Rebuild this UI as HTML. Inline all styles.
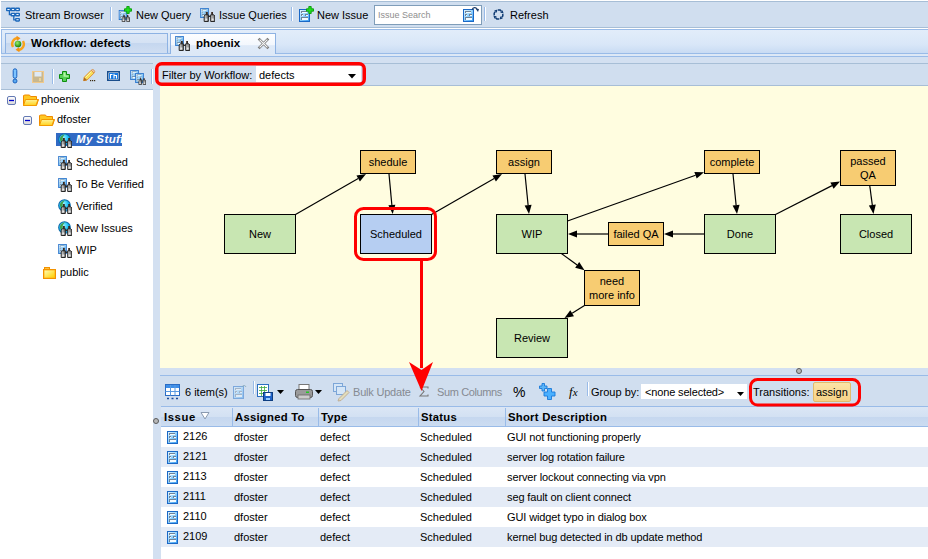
<!DOCTYPE html>
<html><head><meta charset="utf-8">
<style>
*{box-sizing:border-box;margin:0;padding:0}
html,body{width:928px;height:559px;overflow:hidden;background:#fff;font-family:"Liberation Sans",sans-serif;font-size:11px;color:#000}
.a{position:absolute}
.t{position:absolute;white-space:nowrap;line-height:13px}
svg{position:absolute;overflow:visible}
</style></head><body>

<!-- top toolbar -->
<div class="a" style="left:1px;top:1px;width:927px;height:27px;background:#d0deef;border-top:1px solid #a7bed6;border-bottom:1px solid #a7bed6"></div>
<div class="t" style="left:25px;top:9px">Stream Browser</div>
<div class="a" style="left:110px;top:7px;width:2px;height:14px;background:#99bbe8;border-right:1px solid #fff"></div>
<div class="t" style="left:136px;top:9px">New Query</div>
<div class="t" style="left:219px;top:9px">Issue Queries</div>
<div class="a" style="left:291px;top:7px;width:2px;height:14px;background:#99bbe8;border-right:1px solid #fff"></div>
<div class="t" style="left:317px;top:9px">New Issue</div>
<div class="a" style="left:374px;top:5px;width:108px;height:20px;background:#fff;border:1px solid #7f9db9"></div>
<div class="t" style="left:378px;top:9px;color:#8e8e8e;font-size:9px">Issue Search</div>
<div class="a" style="left:484px;top:7px;width:2px;height:14px;background:#99bbe8;border-right:1px solid #fff"></div>
<div class="t" style="left:510px;top:9px">Refresh</div>

<!-- tab strip -->
<div class="a" style="left:1px;top:29px;width:927px;height:28px;background:linear-gradient(#e2edfa,#d9e7f8 55%,#c3d7f2);border:1px solid #99bbe8;border-right:none"></div>
<div class="a" style="left:1px;top:53px;width:927px;height:4px;background:#dde8f6;border-top:1px solid #99bbe8;border-bottom:1px solid #99bbe8"></div>
<div class="a" style="left:5px;top:33px;width:163px;height:20px;background:linear-gradient(#dce7f6 0,#d5e2f4 45%,#c5d7ef 50%,#d0def2 100%);border:1px solid #8db2e3;border-bottom:none"></div>
<div class="t" style="left:31px;top:36px;font-weight:bold;font-size:11.6px">Workflow: defects</div>
<div class="a" style="left:170px;top:33px;width:106px;height:21px;background:linear-gradient(#fdfeff 0,#f3f7fd 55%,#dfeaf8 58%,#dce8f7 100%);border:1px solid #8db2e3;border-bottom:none"></div>
<div class="t" style="left:196px;top:37px;font-weight:bold;font-size:11.5px">phoenix</div>

<!-- body bg -->
<div class="a" style="left:1px;top:57px;width:927px;height:502px;background:#d3e0f1"></div>

<!-- left panel -->
<div class="a" style="left:1px;top:63px;width:152px;height:496px;background:#fff"></div>
<div class="a" style="left:1px;top:63px;width:152px;height:27px;background:#d0deef;border-top:1px solid #a7bed6;border-bottom:1px solid #a7bed6"></div>

<!-- tree -->
<div class="t" style="left:41px;top:93px">phoenix</div>
<div class="t" style="left:57px;top:113px">dfoster</div>
<div class="a" style="left:56px;top:133px;width:66px;height:13px;background:#316ac5"></div>
<div class="t" style="left:76px;top:133px;font-weight:bold;font-style:italic;color:#fff;width:46px;overflow:hidden;font-size:11.5px;letter-spacing:0.4px">My Stuff</div>
<div class="t" style="left:76px;top:156px">Scheduled</div>
<div class="t" style="left:76px;top:178px">To Be Verified</div>
<div class="t" style="left:76px;top:200px">Verified</div>
<div class="t" style="left:76px;top:222px">New Issues</div>
<div class="t" style="left:76px;top:244px">WIP</div>
<div class="t" style="left:60px;top:266px">public</div>

<!-- filter bar -->
<div class="a" style="left:160px;top:63px;width:768px;height:23px;background:#d0deef;border-top:1px solid #a7bed6;border-bottom:1px solid #a7bed6"></div>
<div class="t" style="left:162px;top:69px">Filter by Workflow:</div>
<div class="a" style="left:256px;top:66px;width:105px;height:16px;background:#fff"></div>
<div class="t" style="left:259px;top:69px">defects</div>

<!-- canvas -->
<div class="a" style="left:160px;top:86px;width:768px;height:282px;background:#fffde0"></div>

<!-- grid toolbar -->
<div class="a" style="left:160px;top:375px;width:768px;height:32px;background:#d0deef;border-top:1px solid #99bbe8"></div>
<div class="t" style="left:185px;top:386px">6 item(s)</div>
<div class="t" style="left:353px;top:386px;color:#858a92;letter-spacing:-0.2px">Bulk Update</div>
<div class="t" style="left:437px;top:386px;color:#858a92;letter-spacing:-0.38px">Sum Columns</div>
<div class="t" style="left:591px;top:386px">Group by:</div>
<div class="a" style="left:641px;top:384px;width:106px;height:15px;background:#fff"></div>
<div class="t" style="left:645px;top:386px;letter-spacing:-0.15px">&lt;none selected&gt;</div>
<div class="t" style="left:753px;top:386px">Transitions:</div>

<!-- grid -->
<div class="a" style="left:161px;top:407px;width:767px;height:152px;background:#fff"></div>
<div class="a" style="left:161px;top:406px;width:767px;height:21px;background:linear-gradient(#dbe6f5 0,#d3e1f3 50%,#c5d7ef 51%,#ccdcf1 100%);border-top:1px solid #99bbe8;border-bottom:1px solid #99bbe8"></div>
<div class="t" style="left:164px;top:411px;font-weight:bold;font-size:11.3px;letter-spacing:0.6px">Issue</div>
<div class="t" style="left:235px;top:411px;font-weight:bold;font-size:11.3px;letter-spacing:0.25px">Assigned To</div>
<div class="t" style="left:321px;top:411px;font-weight:bold;font-size:11.3px;letter-spacing:0.25px">Type</div>
<div class="t" style="left:421px;top:411px;font-weight:bold;font-size:11.3px;letter-spacing:0.25px">Status</div>
<div class="t" style="left:508px;top:411px;font-weight:bold;font-size:11.3px;letter-spacing:0.25px">Short Description</div>

<div class="a" style="left:813px;top:382px;width:38px;height:20px;background:linear-gradient(#fbe3a6,#f6d287);border:1px solid #e3bb6a;border-radius:2px"></div>
<div class="t" style="left:816px;top:386px">assign</div>
<div class="a" style="left:232px;top:408px;width:1px;height:18px;background:#99bbe8"></div>
<div class="a" style="left:318px;top:408px;width:1px;height:18px;background:#99bbe8"></div>
<div class="a" style="left:418px;top:408px;width:1px;height:18px;background:#99bbe8"></div>
<div class="a" style="left:505px;top:408px;width:1px;height:18px;background:#99bbe8"></div>
<!--ROWS-->
<div class="a" style="left:161px;top:427px;width:767px;height:20px;background:#fff"></div>
<div class="t" style="left:183px;top:430px">2126</div>
<div class="t" style="left:234px;top:431px">dfoster</div>
<div class="t" style="left:320px;top:431px">defect</div>
<div class="t" style="left:420px;top:431px">Scheduled</div>
<div class="t" style="left:507px;top:431px;letter-spacing:-0.12px">GUI not functioning properly</div>
<div class="a" style="left:161px;top:447px;width:767px;height:20px;background:#e4ebf6"></div>
<div class="t" style="left:183px;top:450px">2121</div>
<div class="t" style="left:234px;top:451px">dfoster</div>
<div class="t" style="left:320px;top:451px">defect</div>
<div class="t" style="left:420px;top:451px">Scheduled</div>
<div class="t" style="left:507px;top:451px;letter-spacing:-0.12px">server log rotation failure</div>
<div class="a" style="left:161px;top:467px;width:767px;height:20px;background:#fff"></div>
<div class="t" style="left:183px;top:470px">2113</div>
<div class="t" style="left:234px;top:471px">dfoster</div>
<div class="t" style="left:320px;top:471px">defect</div>
<div class="t" style="left:420px;top:471px">Scheduled</div>
<div class="t" style="left:507px;top:471px;letter-spacing:-0.12px">server lockout connecting via vpn</div>
<div class="a" style="left:161px;top:487px;width:767px;height:20px;background:#e4ebf6"></div>
<div class="t" style="left:183px;top:490px">2111</div>
<div class="t" style="left:234px;top:491px">dfoster</div>
<div class="t" style="left:320px;top:491px">defect</div>
<div class="t" style="left:420px;top:491px">Scheduled</div>
<div class="t" style="left:507px;top:491px;letter-spacing:-0.12px">seg fault on client connect</div>
<div class="a" style="left:161px;top:507px;width:767px;height:20px;background:#fff"></div>
<div class="t" style="left:183px;top:510px">2110</div>
<div class="t" style="left:234px;top:511px">dfoster</div>
<div class="t" style="left:320px;top:511px">defect</div>
<div class="t" style="left:420px;top:511px">Scheduled</div>
<div class="t" style="left:507px;top:511px;letter-spacing:-0.12px">GUI widget typo in dialog box</div>
<div class="a" style="left:161px;top:527px;width:767px;height:20px;background:#e4ebf6"></div>
<div class="t" style="left:183px;top:530px">2109</div>
<div class="t" style="left:234px;top:531px">dfoster</div>
<div class="t" style="left:320px;top:531px">defect</div>
<div class="t" style="left:420px;top:531px">Scheduled</div>
<div class="t" style="left:507px;top:531px;letter-spacing:-0.12px">kernel bug detected in db update method</div>
<svg width="0" height="0" style="position:absolute">
<defs>
<linearGradient id="gdoc" x1="0" y1="0" x2="0.9" y2="1"><stop offset="0" stop-color="#eaf7ff"/><stop offset="0.4" stop-color="#a6dcff"/><stop offset="1" stop-color="#3a9df2"/></linearGradient>
<linearGradient id="gfold2" x1="0" y1="0" x2="1" y2="1"><stop offset="0" stop-color="#fffbb0"/><stop offset="1" stop-color="#ffd000"/></linearGradient>
<linearGradient id="gfold" x1="0" y1="0" x2="0" y2="1"><stop offset="0" stop-color="#fff39a"/><stop offset="1" stop-color="#ffd21c"/></linearGradient>
<radialGradient id="gglobe" cx="0.4" cy="0.35" r="0.75"><stop offset="0" stop-color="#9ff0ff"/><stop offset="0.55" stop-color="#16c0f5"/><stop offset="1" stop-color="#0b7fc8"/></radialGradient>
<radialGradient id="gball" cx="0.4" cy="0.35" r="0.6"><stop offset="0" stop-color="#9cef6a"/><stop offset="1" stop-color="#1c8a10"/></radialGradient>
<linearGradient id="gminus" x1="0" y1="0" x2="0" y2="1"><stop offset="0" stop-color="#fff"/><stop offset="1" stop-color="#d8d8d8"/></linearGradient>
<symbol id="doc" viewBox="0 0 11 13"><rect x="0.5" y="0.5" width="10" height="12" fill="url(#gdoc)" stroke="#1a68c6"/><path d="M2 2h6v1h-5v1h-1zM2 5h2v1h-1v1h-1zM6 5h3v1h-2v1h-1zM2 8h7v1h-6v2h-1z" fill="#6f8398"/><path d="M3 3h5v1h-5zM3 6h1v1h-1zM7 6h2v1h-2zM3 9h6v2h-6z" fill="#f4fbff"/></symbol>
<symbol id="bino" viewBox="0 0 12 10"><linearGradient id="gbar" x1="0" y1="0" x2="1" y2="0"><stop offset="0" stop-color="#d8d8d8"/><stop offset="1" stop-color="#6a6a6a"/></linearGradient><rect x="3" y="0" width="1.8" height="3.5" fill="#3a2a22"/><rect x="8.2" y="0" width="1.8" height="3.5" fill="#3a2a22"/><rect x="5" y="3.6" width="3" height="1.4" fill="#2a2a2a"/><path d="M2.2 2.8h3.1v6.7h-4.1v-5.6z" fill="url(#gbar)" stroke="#262626" stroke-width="1"/><path d="M7.7 2.8h3.1l1 1.1v5.6h-4.1z" fill="url(#gbar)" stroke="#262626" stroke-width="1"/><rect x="2.3" y="6.5" width="2" height="2" fill="#e6e6e6"/><rect x="8.7" y="6.5" width="2" height="2" fill="#e6e6e6"/></symbol>
<symbol id="plus" viewBox="0 0 8 8"><path d="M2.8 0.5h2.4v2.3h2.3v2.4h-2.3v2.3h-2.4v-2.3h-2.3v-2.4h2.3z" fill="#20e020" stroke="#079a07" stroke-width="0.9"/></symbol>
<symbol id="folder" viewBox="0 0 16 12"><path d="M0.5 1.5v10h13l2-6h-2v-3h-6l-1-1.5h-4.5z" fill="#ffc823" stroke="#f08a00" stroke-width="1"/><path d="M2.5 5.5h12.5l-2 6h-12.5z" fill="url(#gfold)" stroke="#f39a00" stroke-width="1"/></symbol>
<symbol id="minus" viewBox="0 0 9 9"><rect x="0.5" y="0.5" width="8" height="8" rx="1.5" fill="url(#gminus)" stroke="#6479b4"/><path d="M2 4.5h5" stroke="#0000cc" stroke-width="1.3"/></symbol>
<symbol id="globe" viewBox="0 0 13 13"><circle cx="6.5" cy="6.5" r="5.8" fill="url(#gglobe)" stroke="#0d6aa8" stroke-width="1.1"/><path d="M2 5c0.8-2.2 3-3.5 5-3.5 -1.5 1.2-2.5 2.5-2.2 4.2 0.2 1.2-0.6 2.2-1.2 3.6c-1.2-1-1.8-2.6-1.6-4.3z" fill="#3f9a38" opacity="0.9"/></symbol>
</defs></svg>
<svg class="a" style="left:5px;top:6px" width="16" height="16" viewBox="0 0 16 16"><g fill="#eaf5ff" stroke="#1c68bb" stroke-width="1.4"><rect x="1.7" y="2.2" width="3.6" height="2.4" rx="0.4"/><rect x="6.2" y="2.2" width="3.6" height="2.4" rx="0.4"/><rect x="10.7" y="2.2" width="3.6" height="2.4" rx="0.4"/><rect x="6.2" y="7.4" width="3.6" height="2.4" rx="0.4"/><rect x="10.7" y="7.4" width="3.6" height="2.4" rx="0.4"/><rect x="10.7" y="12.6" width="3.6" height="2.4" rx="0.4"/></g><path d="M4.4 4.6v4h1.8M8.8 9.8v4h1.8" fill="none" stroke="#1c68bb" stroke-width="1.3"/></svg>
<svg class="a" style="left:118px;top:10px" width="10" height="10"><use href="#doc" width="10" height="10"/></svg>
<svg class="a" style="left:121px;top:15px" width="9" height="7"><use href="#bino" width="9" height="7"/></svg>
<svg class="a" style="left:124px;top:6px" width="8" height="8"><use href="#plus" width="8" height="8"/></svg>
<svg class="a" style="left:200px;top:8px" width="9" height="10"><use href="#doc" width="9" height="10"/></svg>
<svg class="a" style="left:203px;top:12px" width="12" height="10"><use href="#bino" width="12" height="10"/></svg>
<svg class="a" style="left:299px;top:9px" width="11" height="13"><use href="#doc" width="11" height="13"/></svg>
<svg class="a" style="left:306px;top:6px" width="8" height="8"><use href="#plus" width="8" height="8"/></svg>
<svg class="a" style="left:463px;top:9px" width="11" height="13"><use href="#doc" width="11" height="13"/></svg>
<svg class="a" style="left:471px;top:6px" width="9" height="7" viewBox="0 0 9 7"><path d="M1 4c1-3 4-3 5-1" fill="none" stroke="#1d3d6a" stroke-width="1.2"/><path d="M4.5 2.5l3.5 0.5-1 3z" fill="#1d3d6a"/></svg>
<svg class="a" style="left:493px;top:9px" width="11" height="11" viewBox="0 0 11 11"><g fill="none" stroke="#0f3c74" stroke-width="1.5"><path d="M1.2 6.2V4.2L2.3 2.6M5 1.1H7.2L8.4 2.3M9.8 5V7L8.7 8.4M6 9.9H3.8L2.6 8.7"/></g><g fill="#0f3c74"><path d="M4.6 0.4L1.2 1.4 3.6 3.8z"/><path d="M10.6 4.6L9.6 1.2 7.2 3.6z"/><path d="M6.4 10.6L9.8 9.6 7.4 7.2z"/><path d="M0.4 6.4L1.4 9.8 3.8 7.4z"/></g></svg>
<svg class="a" style="left:9px;top:35px" width="18" height="18" viewBox="0 0 18 18"><g fill="none" stroke="#f7a21c" stroke-width="2.4"><path d="M4 12A6 6 0 0 1 8.5 3"/><path d="M14 6A6 6 0 0 1 9.5 15"/></g><path d="M7.5 0.8l4 2.4-3.6 2.8z M10.5 17.2l-4-2.4 3.6-2.8z" fill="#f39212"/><circle cx="9" cy="9" r="3.3" fill="url(#gball)"/></svg>
<svg class="a" style="left:175px;top:36px" width="9" height="10"><use href="#doc" width="9" height="10"/></svg>
<svg class="a" style="left:178px;top:41px" width="12" height="10"><use href="#bino" width="12" height="10"/></svg>
<svg class="a" style="left:258px;top:38px" width="11" height="11" viewBox="0 0 11 11"><path d="M1.6 1.6l7.8 7.8M9.4 1.6l-7.8 7.8" stroke="#7c7c7c" stroke-width="2.7" stroke-linecap="square"/><path d="M1.6 1.6l7.8 7.8M9.4 1.6l-7.8 7.8" stroke="#fafafa" stroke-width="1.1" stroke-linecap="butt"/></svg>
<svg class="a" style="left:12px;top:68px" width="6" height="16" viewBox="0 0 6 16"><rect x="1.2" y="0.8" width="3.6" height="9.5" rx="1.8" fill="#7ec4ff" stroke="#1a62c0" stroke-width="1"/><circle cx="3" cy="13" r="2" fill="#5aaaf0" stroke="#1a62c0" stroke-width="1"/></svg>
<svg class="a" style="left:32px;top:71px" width="12" height="12" viewBox="0 0 12 12"><rect x="0.5" y="0.5" width="11" height="11" fill="#c8b890" stroke="#f1c98a" stroke-width="1"/><rect x="2.5" y="1" width="7" height="4.5" fill="#dfeaf5"/><rect x="7" y="7" width="2" height="3" fill="#ead49a"/></svg>
<div class="a" style="left:52px;top:69px;width:1px;height:15px;background:#99bbe8;border-right:1px solid #fff;width:2px"></div>
<svg class="a" style="left:59px;top:71px" width="11" height="11" viewBox="0 0 11 11"><path d="M3.5 0.5h4v3h3v4h-3v3h-4v-3h-3v-4h3z" fill="#58d058" stroke="#0e8f0e" stroke-width="1"/><path d="M4.5 1.5h2v3h3v1.2h-5z" fill="#b6f5a8"/></svg>
<svg class="a" style="left:82px;top:69px" width="14" height="13" viewBox="0 0 14 13"><path d="M2.2 8.3l7-7 2.8 2.8-7 7-3.3 0.6z" fill="#f7e05a" stroke="#e0963a" stroke-width="1"/><path d="M9.2 1.3l2.8 2.8 0.6-0.9c0.3-0.6 0-1.4-0.6-2s-1.4-0.9-2-0.6z" fill="#f4c6a0" stroke="#d08a40" stroke-width="0.8"/><path d="M1.4 11.9l0.8-3.6 2.8 2.8z" fill="#b06a20"/><path d="M3.5 8.5l6-6" stroke="#fff7b0" stroke-width="0.9"/><rect x="8" y="11" width="1.2" height="1.2" fill="#3a2a10"/><rect x="10" y="11" width="1.2" height="1.2" fill="#3a2a10"/><rect x="12" y="11" width="1.2" height="1.2" fill="#3a2a10"/></svg>
<svg class="a" style="left:107px;top:71px" width="13" height="10" viewBox="0 0 13 10"><rect x="0.75" y="0.75" width="11.5" height="8.5" fill="#fff" stroke="#1a4e8c" stroke-width="1.5"/><rect x="2" y="2" width="9" height="6" fill="#1678e0"/><path d="M3.5 7.5v-4h2M7 2.8v4.7M7 4.5h2.5v3" fill="none" stroke="#fff" stroke-width="1.1"/></svg>
<svg class="a" style="left:130px;top:70px" width="9" height="10"><use href="#doc" width="9" height="10"/></svg>
<svg class="a" style="left:135px;top:73px" width="9" height="10"><use href="#doc" width="9" height="10"/></svg>
<svg class="a" style="left:138px;top:78px" width="8" height="7"><use href="#bino" width="8" height="7"/></svg>
<div class="a" style="left:151px;top:69px;width:2px;height:15px;background:#99bbe8;border-right:1px solid #fff"></div>
<svg class="a" style="left:7px;top:96px" width="9" height="9"><use href="#minus" width="9" height="9"/></svg>
<svg class="a" style="left:23px;top:94px" width="16" height="12"><use href="#folder" width="16" height="12"/></svg>
<svg class="a" style="left:23px;top:116px" width="9" height="9"><use href="#minus" width="9" height="9"/></svg>
<svg class="a" style="left:39px;top:114px" width="16" height="12"><use href="#folder" width="16" height="12"/></svg>
<svg class="a" style="left:58px;top:133px" width="13" height="13"><use href="#globe" width="13" height="13"/></svg>
<svg class="a" style="left:60px;top:138px" width="12" height="10"><use href="#bino" width="12" height="10"/></svg>
<svg class="a" style="left:58px;top:156px" width="9" height="10"><use href="#doc" width="9" height="10"/></svg>
<svg class="a" style="left:60px;top:160px" width="12" height="10"><use href="#bino" width="12" height="10"/></svg>
<svg class="a" style="left:58px;top:178px" width="9" height="10"><use href="#doc" width="9" height="10"/></svg>
<svg class="a" style="left:60px;top:182px" width="12" height="10"><use href="#bino" width="12" height="10"/></svg>
<svg class="a" style="left:58px;top:199px" width="13" height="13"><use href="#globe" width="13" height="13"/></svg>
<svg class="a" style="left:60px;top:204px" width="12" height="10"><use href="#bino" width="12" height="10"/></svg>
<svg class="a" style="left:58px;top:221px" width="13" height="13"><use href="#globe" width="13" height="13"/></svg>
<svg class="a" style="left:60px;top:226px" width="12" height="10"><use href="#bino" width="12" height="10"/></svg>
<svg class="a" style="left:58px;top:244px" width="9" height="10"><use href="#doc" width="9" height="10"/></svg>
<svg class="a" style="left:60px;top:248px" width="12" height="10"><use href="#bino" width="12" height="10"/></svg>
<svg class="a" style="left:43px;top:267px" width="13" height="12" viewBox="0 0 13 12"><rect x="1.5" y="0.5" width="5" height="2.5" fill="#ffc23a" stroke="#f39200"/><rect x="0.5" y="2.5" width="12" height="9" fill="#ffb41e" stroke="#f39200"/><rect x="1.5" y="3.5" width="10" height="7" fill="url(#gfold2)"/></svg>
<svg class="a" style="left:348px;top:74px" width="9" height="5" viewBox="0 0 9 5"><path d="M0 0h8l-4 4.5z" fill="#000"/></svg>
<svg class="a" style="left:165px;top:384px" width="16" height="17" viewBox="0 0 16 17"><rect x="0.5" y="0.5" width="14" height="11" fill="#fff" stroke="#2a6cc4"/><rect x="1" y="1" width="13" height="3" fill="#3d8ee8"/><path d="M0.5 7.5h14M5.5 1v10.5M10 1v10.5" stroke="#5a9ae0" stroke-width="1"/><path d="M2 14.5h2M6.5 14.5h2M11 14.5h2" stroke="#1a4a9a" stroke-width="1.6"/></svg>
<svg class="a" style="left:233px;top:384px" width="15" height="15" viewBox="0 0 15 15"><g opacity="0.45"><use href="#doc" x="0" y="2" width="11" height="13"/></g><path d="M9 3c1-2 3-2 4 0" fill="none" stroke="#8ab" stroke-width="1"/></svg>
<div class="a" style="left:253px;top:381px;width:2px;height:13px;background:#99bbe8;border-right:1px solid #fff"></div>
<svg class="a" style="left:257px;top:384px" width="18" height="17" viewBox="0 0 18 17"><rect x="0.5" y="0.5" width="11" height="12" fill="#fff" stroke="#2b6fc2"/><path d="M2 3.5h8M2 6.5h8M2 9.5h8M4.5 2v10M7.5 2v10" stroke="#3fa83f" stroke-width="0.8"/><rect x="6.5" y="8.5" width="9" height="8" fill="#1e62c8" stroke="#0d3d80"/><rect x="8.5" y="9" width="5" height="3" fill="#fff"/><rect x="9" y="14" width="4" height="2" fill="#9cf"/></svg>
<svg class="a" style="left:277px;top:390px" width="8" height="5" viewBox="0 0 8 5"><path d="M0 0h7l-3.5 4z" fill="#000"/></svg>
<svg class="a" style="left:295px;top:384px" width="18" height="16" viewBox="0 0 18 16"><rect x="4" y="0.5" width="10" height="6" fill="#fff" stroke="#777"/><rect x="0.5" y="5.5" width="17" height="8" rx="2" fill="#9a9a9a" stroke="#555"/><rect x="3" y="11" width="12" height="4" fill="#ccc" stroke="#666" stroke-width="0.8"/><rect x="11" y="7.5" width="3" height="1.5" fill="#2c2"/></svg>
<svg class="a" style="left:315px;top:390px" width="8" height="5" viewBox="0 0 8 5"><path d="M0 0h7l-3.5 4z" fill="#000"/></svg>
<svg class="a" style="left:333px;top:383px" width="17" height="17" viewBox="0 0 17 17"><g opacity="0.5"><rect x="0.5" y="0.5" width="9" height="8" fill="#dbeeff" stroke="#2b6fc2"/><rect x="3.5" y="3.5" width="9" height="8" fill="#dbeeff" stroke="#2b6fc2"/><path d="M6 15.5l8-8 2 2-8 8-3 0.5z" fill="#f5dd88" stroke="#b08040"/></g></svg>
<svg class="a" style="left:419px;top:386px" width="11" height="11" viewBox="0 0 11 11"><path d="M1 1h8v1.5M1 1l4 4.5-4 4.5h8v-1.5" fill="none" stroke="#777" stroke-width="1.1"/></svg>
<div class="t" style="left:513px;top:385px;font-size:14px;line-height:14px">%</div>
<svg class="a" style="left:539px;top:383px" width="18" height="18" viewBox="0 0 18 18"><path d="M3 0.5h2.5v2.5h2.5v2.5h-2.5v2.5h-2.5v-2.5h-2.5v-2.5h2.5z" fill="#5ab4f8" stroke="#1a78d8" stroke-width="0.9"/><path d="M8.5 5.5h4v3.5h3.5v4h-3.5v3.5h-4v-3.5h-3.5v-4h3.5z" fill="#4ab0ff" stroke="#1a78d8" stroke-width="0.9"/></svg>
<div class="t" style="left:569px;top:385px;font-family:'Liberation Serif';font-style:italic;font-size:13px;line-height:13px">f<span style="font-size:11px">x</span></div>
<div class="a" style="left:587px;top:382px;width:2px;height:14px;background:#99bbe8;border-right:1px solid #fff"></div>
<svg class="a" style="left:737px;top:392px" width="8" height="5" viewBox="0 0 8 5"><path d="M0 0h7l-3.5 4z" fill="#000"/></svg>
<svg class="a" style="left:200px;top:411px" width="10" height="9" viewBox="0 0 10 9"><path d="M1 1.5h8l-4 6.5z" fill="#fff" stroke="#8a9ab0" stroke-width="1"/></svg>
<svg class="a" style="left:152px;top:417px" width="8" height="8" viewBox="0 0 8 8"><circle cx="4" cy="4" r="2.5" fill="#b8b8b8" stroke="#5a5a5a" stroke-width="1"/></svg>
<svg class="a" style="left:795px;top:367px" width="8" height="8" viewBox="0 0 8 8"><circle cx="4" cy="4" r="2.5" fill="#b8b8b8" stroke="#5a5a5a" stroke-width="1"/></svg>
<svg class="a" style="left:167px;top:431px" width="11" height="13"><use href="#doc" width="11" height="13"/></svg>
<svg class="a" style="left:167px;top:451px" width="11" height="13"><use href="#doc" width="11" height="13"/></svg>
<svg class="a" style="left:167px;top:471px" width="11" height="13"><use href="#doc" width="11" height="13"/></svg>
<svg class="a" style="left:167px;top:491px" width="11" height="13"><use href="#doc" width="11" height="13"/></svg>
<svg class="a" style="left:167px;top:511px" width="11" height="13"><use href="#doc" width="11" height="13"/></svg>
<svg class="a" style="left:167px;top:531px" width="11" height="13"><use href="#doc" width="11" height="13"/></svg>
<svg class="a" style="left:0;top:0" width="928" height="559" viewBox="0 0 928 559">
<rect x="224.5" y="214.5" width="71" height="39" fill="#c8e6b2" stroke="#000" stroke-width="1"/>
<rect x="360.5" y="150.5" width="55" height="23" fill="#f7cc72" stroke="#000" stroke-width="1"/>
<rect x="360.5" y="214.5" width="71" height="39" fill="#b6cef2" stroke="#000" stroke-width="1"/>
<rect x="496.5" y="150.5" width="55" height="23" fill="#f7cc72" stroke="#000" stroke-width="1"/>
<rect x="496.5" y="214.5" width="71" height="39" fill="#c8e6b2" stroke="#000" stroke-width="1"/>
<rect x="704.5" y="150.5" width="55" height="23" fill="#f7cc72" stroke="#000" stroke-width="1"/>
<rect x="704.5" y="214.5" width="71" height="39" fill="#c8e6b2" stroke="#000" stroke-width="1"/>
<rect x="840.5" y="150.5" width="55" height="35" fill="#f7cc72" stroke="#000" stroke-width="1"/>
<rect x="840.5" y="214.5" width="71" height="39" fill="#c8e6b2" stroke="#000" stroke-width="1"/>
<rect x="608.5" y="222.5" width="55" height="23" fill="#f7cc72" stroke="#000" stroke-width="1"/>
<rect x="584.5" y="270.5" width="55" height="35" fill="#f7cc72" stroke="#000" stroke-width="1"/>
<rect x="496.5" y="318.5" width="71" height="39" fill="#c8e6b2" stroke="#000" stroke-width="1"/>
<text x="260.0" y="238" text-anchor="middle" font-family="Liberation Sans" font-size="11" fill="#000">New</text>
<text x="388.0" y="166" text-anchor="middle" font-family="Liberation Sans" font-size="11" fill="#000">shedule</text>
<text x="396.0" y="238" text-anchor="middle" font-family="Liberation Sans" font-size="11" fill="#000">Scheduled</text>
<text x="524.0" y="166" text-anchor="middle" font-family="Liberation Sans" font-size="11" fill="#000">assign</text>
<text x="532.0" y="238" text-anchor="middle" font-family="Liberation Sans" font-size="11" fill="#000">WIP</text>
<text x="732.0" y="166" text-anchor="middle" font-family="Liberation Sans" font-size="11" fill="#000">complete</text>
<text x="740.0" y="238" text-anchor="middle" font-family="Liberation Sans" font-size="11" fill="#000">Done</text>
<text x="868.0" y="165" text-anchor="middle" font-family="Liberation Sans" font-size="11" fill="#000">passed</text>
<text x="868.0" y="179" text-anchor="middle" font-family="Liberation Sans" font-size="11" fill="#000">QA</text>
<text x="876.0" y="238" text-anchor="middle" font-family="Liberation Sans" font-size="11" fill="#000">Closed</text>
<text x="636.0" y="238" text-anchor="middle" font-family="Liberation Sans" font-size="11" fill="#000">failed QA</text>
<text x="612.0" y="285" text-anchor="middle" font-family="Liberation Sans" font-size="11" fill="#000">need</text>
<text x="612.0" y="299" text-anchor="middle" font-family="Liberation Sans" font-size="11" fill="#000">more info</text>
<text x="532.0" y="342" text-anchor="middle" font-family="Liberation Sans" font-size="11" fill="#000">Review</text>
<line x1="295.5" y1="214.5" x2="358.20" y2="178.48" stroke="#000" stroke-width="1.2"/>
<path d="M366.00,174.00 L359.94,181.52 L356.45,175.45 Z" fill="#000"/>
<line x1="389" y1="174" x2="391.87" y2="205.04" stroke="#000" stroke-width="1.2"/>
<path d="M392.70,214.00 L388.39,205.36 L395.36,204.72 Z" fill="#000"/>
<line x1="431.5" y1="214.5" x2="494.20" y2="178.48" stroke="#000" stroke-width="1.2"/>
<path d="M502.00,174.00 L495.94,181.52 L492.45,175.45 Z" fill="#000"/>
<line x1="525" y1="174" x2="528.10" y2="205.04" stroke="#000" stroke-width="1.2"/>
<path d="M529.00,214.00 L524.62,205.39 L531.59,204.70 Z" fill="#000"/>
<line x1="567.5" y1="221" x2="695.53" y2="175.23" stroke="#000" stroke-width="1.2"/>
<path d="M704.00,172.20 L696.70,178.53 L694.35,171.93 Z" fill="#000"/>
<line x1="608" y1="234" x2="577.00" y2="234.00" stroke="#000" stroke-width="1.2"/>
<path d="M568.00,234.00 L577.00,230.50 L577.00,237.50 Z" fill="#000"/>
<line x1="704" y1="234" x2="673.00" y2="234.00" stroke="#000" stroke-width="1.2"/>
<path d="M664.00,234.00 L673.00,230.50 L673.00,237.50 Z" fill="#000"/>
<line x1="733" y1="174" x2="736.10" y2="205.04" stroke="#000" stroke-width="1.2"/>
<path d="M737.00,214.00 L732.62,205.39 L739.59,204.70 Z" fill="#000"/>
<line x1="775.5" y1="214.5" x2="831.99" y2="185.60" stroke="#000" stroke-width="1.2"/>
<path d="M840.00,181.50 L833.58,188.72 L830.39,182.48 Z" fill="#000"/>
<line x1="869.8" y1="186" x2="872.32" y2="205.08" stroke="#000" stroke-width="1.2"/>
<path d="M873.50,214.00 L868.85,205.54 L875.79,204.62 Z" fill="#000"/>
<line x1="561.4" y1="253.6" x2="577.19" y2="264.95" stroke="#000" stroke-width="1.2"/>
<path d="M584.50,270.20 L575.15,267.79 L579.23,262.11 Z" fill="#000"/>
<line x1="584.5" y1="305.5" x2="572.13" y2="313.23" stroke="#000" stroke-width="1.2"/>
<path d="M564.50,318.00 L570.28,310.26 L573.99,316.20 Z" fill="#000"/>
<rect x="156.75" y="63.75" width="207.5" height="20.5" rx="5" fill="none" stroke="#f00" stroke-width="3.5"/>
<rect x="355.5" y="208.5" width="80" height="51" rx="8" fill="none" stroke="#f00" stroke-width="3"/>
<line x1="421.5" y1="260" x2="421.5" y2="368" stroke="#f00" stroke-width="3"/>
<path d="M409,362 L421.5,370 L433,362 L421.5,391 Z" fill="#f00"/>
<rect x="750.5" y="379.6" width="109" height="25.5" rx="7" fill="none" stroke="#f00" stroke-width="3"/>
</svg>
</body></html>
